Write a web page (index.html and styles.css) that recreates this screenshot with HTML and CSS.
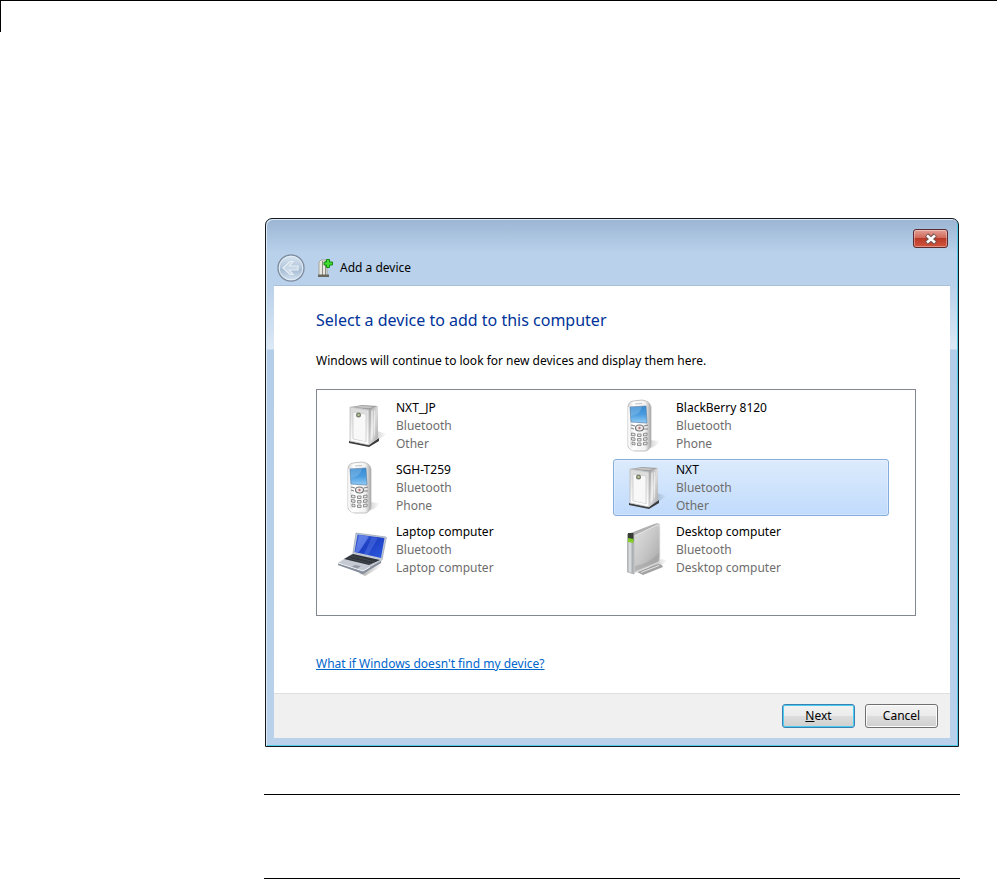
FILE: index.html
```html
<!DOCTYPE html>
<html lang="en">
<head>
  <meta charset="UTF-8">
  <title>Add a device</title>
  <link rel="stylesheet" href="styles.css">
</head>
<body>
  <!-- Shared gradients and device icons -->
  <svg class="defs" aria-hidden="true">
    <defs>
      <linearGradient id="metal" x1="0" y1="0" x2="1" y2="1">
        <stop offset="0" stop-color="#e2e2e2"/>
        <stop offset="0.5" stop-color="#c6c6c6"/>
        <stop offset="0.8" stop-color="#b0b0b0"/>
        <stop offset="1" stop-color="#e4e4e4"/>
      </linearGradient>
      <linearGradient id="side" x1="0" y1="0" x2="1" y2="1">
        <stop offset="0" stop-color="#9b9b9b"/>
        <stop offset="0.5" stop-color="#dcdcdc"/>
        <stop offset="1" stop-color="#a5a5a5"/>
      </linearGradient>
      <linearGradient id="front" x1="0" y1="0" x2="0" y2="1">
        <stop offset="0" stop-color="#d9d9d9"/>
        <stop offset="1" stop-color="#fff"/>
      </linearGradient>
      <linearGradient id="case" x1="0" y1="0" x2="1" y2="0">
        <stop offset="0" stop-color="#d5d5d5"/>
        <stop offset="0.25" stop-color="#fff"/>
        <stop offset="0.75" stop-color="#f1f1f1"/>
        <stop offset="1" stop-color="#a5a5a5"/>
      </linearGradient>
      <linearGradient id="phone-screen" x1="0" y1="0" x2="0" y2="1">
        <stop offset="0" stop-color="#3489cf"/>
        <stop offset="0.5" stop-color="#4a9cdf"/>
        <stop offset="1" stop-color="#93cdf5"/>
      </linearGradient>
      <linearGradient id="laptop-screen" x1="0" y1="0" x2="1" y2="1">
        <stop offset="0" stop-color="#3c63d8"/>
        <stop offset="0.45" stop-color="#1d3fc4"/>
        <stop offset="1" stop-color="#2d5be0"/>
      </linearGradient>
      <linearGradient id="shadow" x1="0" y1="0" x2="1" y2="0">
        <stop offset="0" stop-color="#000" stop-opacity="0.35"/>
        <stop offset="1" stop-color="#000" stop-opacity="0"/>
      </linearGradient>
      <linearGradient id="orb" x1="0" y1="0" x2="0" y2="1">
        <stop offset="0" stop-color="#dbe7f3"/>
        <stop offset="0.5" stop-color="#b3c6da"/>
        <stop offset="0.55" stop-color="#a5bbd2"/>
        <stop offset="1" stop-color="#d6e5f3"/>
      </linearGradient>
    </defs>

    <symbol id="icon-other" viewBox="0 0 60 55">
      <path d="M42 33L52 36L35 47L30 46z" fill="url(#shadow)"/>
      <path d="M14 43L34 47L44 40V43L34 49L14 45z" fill="#3c3c3c"/>
      <path d="M15 9L27 7L43 8L35 12z" fill="#a0a0a0"/>
      <path d="M18 9L27 8L39 9L34 10z" fill="#cbcbcb"/>
      <path d="M34 12L43 8V40L34 47z" fill="url(#side)"/>
      <path d="M36 13L38 12V40L36 43zM39 12L40 12V37L39 39z" fill="#fff" opacity="0.5"/>
      <path d="M15 9L34 12V47L15 43z" fill="url(#front)" stroke="#b4b4b4" stroke-width="0.7"/>
      <path d="M18 14L31 16V44L18 41z" fill="#f8f8f8" stroke="#cacaca" stroke-width="0.8"/>
      <path d="M18 42L31 44.500" stroke="#fff"/>
      <circle cx="23.500" cy="17" r="2.500" fill="#777b6b"/>
      <circle cx="23.500" cy="17" r="1.200" fill="#b8c997"/>
    </symbol>

    <symbol id="icon-phone" viewBox="0 0 60 55">
      <path d="M34 42L45 43Q42 49 30 52L24 52z" fill="url(#shadow)"/>
      <path d="M13 9Q13 4 18 3L27 2Q35 3 36 9V45Q36 51 31 53H20Q14 52 13 48z" fill="url(#case)" stroke="#b4b4b4" stroke-width="0.8"/>
      <path d="M14 9V47Q15 51 19 52" fill="none" stroke="#fff" stroke-width="1.500"/>
      <path d="M20 6L27 5.500" stroke="#c1c1c1"/>
      <path d="M15 9L31 8L32 25L16 24z" fill="url(#phone-screen)" stroke="#5a83aa" stroke-width="0.7"/>
      <path d="M15.500 9L27 8.500Q26 16 16 18z" fill="#fff" opacity="0.18"/>
      <path d="M16 27L20 28M16 30L19 31M29 28L33 27M29 31L33 31" stroke="#858585" stroke-width="1.200"/>
      <ellipse cx="24.500" cy="30" rx="4" ry="3" fill="#eee" stroke="#777" stroke-width="1.200"/>
      <circle cx="24.500" cy="30" r="1.200" fill="#b67771"/>
      <g fill="#e8e8e8" stroke="#868686" stroke-width="0.9">
        <path d="M16.500 35L20 35.500V38L16.500 37.500zM22.500 36H26V38.500H22.500zM28.500 35.500L32 35V37.500L28.500 38z"/>
        <path d="M16.500 39.500L20 40V42.500L16.500 42zM22.500 40.500H26V43H22.500zM28.500 40L32 39.500V42L28.500 42.500z"/>
        <path d="M17 44L20 44.500V47L17 46.500zM22.500 45H26V47.500H22.500zM28.500 44.500L32 44V46.500L28.500 47z"/>
      </g>
    </symbol>

    <symbol id="icon-laptop" viewBox="0 0 60 55">
      <path d="M24 51L44 41L47 44L30 54z" fill="url(#shadow)"/>
      <path d="M21 11L51 15Q52 16 51 17L47 38L18 31z" fill="#c3cbd9" stroke="#98a1b0" stroke-width="0.7"/>
      <path d="M22.500 12.500L49.500 16L46 36L19.500 30z" fill="url(#laptop-screen)"/>
      <path d="M24 13L34 14.500L24 30L20 30z" fill="#8fa9ff" opacity="0.5"/>
      <path d="M37 15L43 16L33 33L29 32z" fill="#89a3ff" opacity="0.25"/>
      <path d="M18 31L47 37L46 41L28 51L3 43V41z" fill="#c5cad2"/>
      <path d="M18 32L45 38L34 43L9 37z" fill="#30343b"/>
      <path d="M16 34L40 40M13 36L36 42" stroke="#50555e" stroke-width="0.6"/>
      <path d="M20 43L26 44L22 47L16 45z" fill="#969ca6"/>
      <path d="M3 41L28 49L46 39V41L28 52L3 43z" fill="#858d9b"/>
      <path d="M3 41L28 49L35 45" fill="none" stroke="#f0f2f5"/>
    </symbol>

    <symbol id="icon-desktop" viewBox="0 0 60 55">
      <path d="M43 37L53 38L43 46L28 51z" fill="url(#shadow)"/>
      <path d="M22 50L43 42Q47 42 48 45L28 53z" fill="#a2a2a2"/>
      <path d="M26 50.500L44 43.500" stroke="#e6e6e6"/>
      <path d="M13 12L39 2Q45 0 45 4V39Q45 41 42 42L19 51L13 50z" fill="#b0b0b0"/>
      <path d="M19 14L42 3Q45 2 45 5V38Q45 40 42 41L19 51z" fill="url(#metal)" stroke="#ededed" stroke-width="0.8"/>
      <path d="M20 44Q33 42 44 31V39L20 49z" fill="#929292" opacity="0.35"/>
      <path d="M12.500 12L18 12Q19 12 19 15V52L12.500 50z" fill="#c0c4c6" stroke="#999" stroke-width="0.6"/>
      <path d="M15 20V50.500" stroke="#dfe2e3" stroke-width="1.500"/>
      <path d="M17.500 20V51" stroke="#a5abae" stroke-width="0.8"/>
      <path d="M13 11H18.500V19L13 17z" fill="#383e35"/>
      <path d="M13 16L18.500 17V21L13 20z" fill="#83cf27"/>
    </symbol>
  </svg>

  <div class="page-rule"></div>

  <main class="content">
    <section class="window" aria-label="Add a device">
      <div class="titlebar">
        <button class="close" type="button" aria-label="Close">
          <svg width="14" height="12" viewBox="0 0 14 12">
            <path d="M2.500 2L11.500 10M11.500 2L2.500 10" stroke="#70504e" stroke-width="4.600"/>
            <path d="M3 2.500L11 9.500M11 2.500L3 9.500" stroke="#fff" stroke-width="2.600"/>
          </svg>
        </button>
      </div>

      <header class="caption">
        <button class="back" type="button" aria-label="Back" disabled>
          <svg width="28" height="28" viewBox="0 0 28 28">
            <circle cx="14" cy="14" r="13" fill="url(#orb)" stroke="#7f8fa1" stroke-width="1.400"/>
            <circle cx="14" cy="14" r="11.800" fill="none" stroke="#e4eef7" stroke-width="1"/>
            <path d="M6 14L13 7.500H16L12.500 12H21V16H12.500L16 20.500H13z" fill="#c8d7e6" stroke="#e6eef6" stroke-width="1.200"/>
          </svg>
        </button>
        <svg class="caption-icon" width="18" height="20" viewBox="0 0 18 20">
          <path d="M2 4L4 2H10V18H2z" fill="#e9e9e2" stroke="#98988f" stroke-width="0.800"/>
          <path d="M5.500 3V17M8.500 3V17" stroke="#8b8b81"/>
          <path d="M1 16.500H12V19H1z" fill="#68685e"/>
          <path d="M9.500 1.500H12.500V4H15.500V7H12.500V9.500H9.500V7H7V4H9.500z" fill="#43dd31" stroke="#118d13"/>
        </svg>
        <span>Add a device</span>
      </header>

      <div class="client">
        <div class="pane">
          <h1>Select a device to add to this computer</h1>
          <p class="hint">Windows will continue to look for new devices and display them here.</p>

          <div class="devices">
            <button class="device" type="button">
              <svg class="icon"><use href="#icon-other"/></svg>
              <span class="info"><span class="name">NXT_JP</span><span>Bluetooth</span><span>Other</span></span>
            </button>
            <button class="device" type="button">
              <svg class="icon"><use href="#icon-phone"/></svg>
              <span class="info"><span class="name">BlackBerry 8120</span><span>Bluetooth</span><span>Phone</span></span>
            </button>
            <button class="device" type="button">
              <svg class="icon"><use href="#icon-phone"/></svg>
              <span class="info"><span class="name">SGH-T259</span><span>Bluetooth</span><span>Phone</span></span>
            </button>
            <button class="device selected" type="button" aria-pressed="true">
              <svg class="icon"><use href="#icon-other"/></svg>
              <span class="info"><span class="name">NXT</span><span>Bluetooth</span><span>Other</span></span>
            </button>
            <button class="device" type="button">
              <svg class="icon"><use href="#icon-laptop"/></svg>
              <span class="info"><span class="name">Laptop computer</span><span>Bluetooth</span><span>Laptop computer</span></span>
            </button>
            <button class="device" type="button">
              <svg class="icon"><use href="#icon-desktop"/></svg>
              <span class="info"><span class="name">Desktop computer</span><span>Bluetooth</span><span>Desktop computer</span></span>
            </button>
          </div>

          <a class="help" href="#">What if Windows doesn't find my device?</a>
        </div>

        <footer class="actions">
          <button class="btn default" type="button"><u>N</u>ext</button>
          <button class="btn" type="button">Cancel</button>
        </footer>
      </div>
    </section>

    <div class="note"></div>
  </main>
</body>
</html>
```
FILE: styles.css
```css
* {
  box-sizing: border-box;
}

body {
  margin: 0;
  background: #fff;
  color: #000;
  font-family: "Noto Sans", "Open Sans", sans-serif;
  font-size: 12px;
  line-height: 18px;
}

button {
  margin: 0;
  padding: 0;
  font: inherit;
  color: inherit;
}

svg {
  display: block;
}

.defs {
  position: absolute;
  width: 0;
  height: 0;
}

/* Rule at the top of the page with its short left tick */
.page-rule {
  height: 32px;
  border-top: 1px solid #000;
  border-left: 1px solid #000;
}

.content {
  padding: 186px 37px 0 264px;
}

/* Window frame */
.window {
  margin: 0 1px;
  padding: 0 8px 8px;
  border: 1px solid #15181c;
  border-radius: 7px 7px 0 0;
  background:
    linear-gradient(#9bb5d3, #b9d1ea 34px, rgba(185, 209, 234, 0) 34px),
    linear-gradient(#b9d1ea 66px, #dce8f5 130px, #b4cee9 131px, #b9d1ea);
  box-shadow: inset 1px 1px 0 #dcebf8, inset -1px -1px 0 #52cbe8;
}

.titlebar {
  display: flex;
  justify-content: flex-end;
  padding: 10px 2px 0;
  height: 32px;
}

.close {
  display: flex;
  align-items: center;
  justify-content: center;
  width: 35px;
  height: 19px;
  border: 1px solid #5a2a30;
  border-radius: 3px;
  background: linear-gradient(#e3a196, #d1695a 45%, #b93a29 50%, #d3553d);
  box-shadow: inset 0 0 0 1px rgba(255, 255, 255, 0.35);
}

.caption {
  display: flex;
  align-items: center;
  height: 34px;
  padding: 0 3px;
}

.back {
  border: 0;
  background: none;
}

.caption-icon {
  margin: 0 5px 0 12px;
}

/* Client area */
.client {
  border-top: 1px solid #a9bfd7;
  background: #fff;
}

.pane {
  padding: 22px 34px 20px 42px;
}

h1 {
  margin: 0;
  color: #003399;
  font-size: 16px;
  font-weight: 400;
  line-height: 24px;
}

.hint {
  margin: 20px 0 19px;
}

.devices {
  display: grid;
  grid-template-columns: repeat(2, 276px);
  grid-auto-rows: 57px;
  align-content: start;
  gap: 5px 4px;
  height: 227px;
  padding: 7px 16px;
  border: 1px solid #828790;
}

.device {
  display: flex;
  padding: 0 1px;
  border: 1px solid transparent;
  border-radius: 3px;
  background: none;
  text-align: left;
}

.device.selected {
  border-color: #84acdd;
  background: linear-gradient(#dcebfc, #c1dbfc);
  box-shadow: inset 0 0 0 1px rgba(255, 255, 255, 0.3);
}

.icon {
  width: 60px;
  height: 55px;
}

.info {
  display: flex;
  flex-direction: column;
  padding: 1px 0 0 1px;
  color: #6d6d6d;
}

.name {
  color: #000;
}

.help {
  display: inline-block;
  margin-top: 39px;
  color: #0066cc;
}

/* Button strip */
.actions {
  display: flex;
  justify-content: flex-end;
  gap: 10px;
  padding: 10px 12px;
  border-top: 1px solid #dfdfdf;
  background: #f0f0f0;
}

.btn {
  width: 73px;
  height: 24px;
  border: 1px solid #707070;
  border-radius: 3px;
  background: linear-gradient(#f2f2f2, #ebebeb 50%, #dddddd 50%, #cfcfcf);
  box-shadow: inset 0 0 0 1px #fcfcfc;
}

.btn.default {
  border-color: #3c7fb1;
  box-shadow: inset 0 0 0 1px #48cdf2;
}

/* Empty note between two rules */
.note {
  height: 85px;
  margin-top: 47px;
  border-top: 1px solid #000;
  border-bottom: 1px solid #000;
}
```
